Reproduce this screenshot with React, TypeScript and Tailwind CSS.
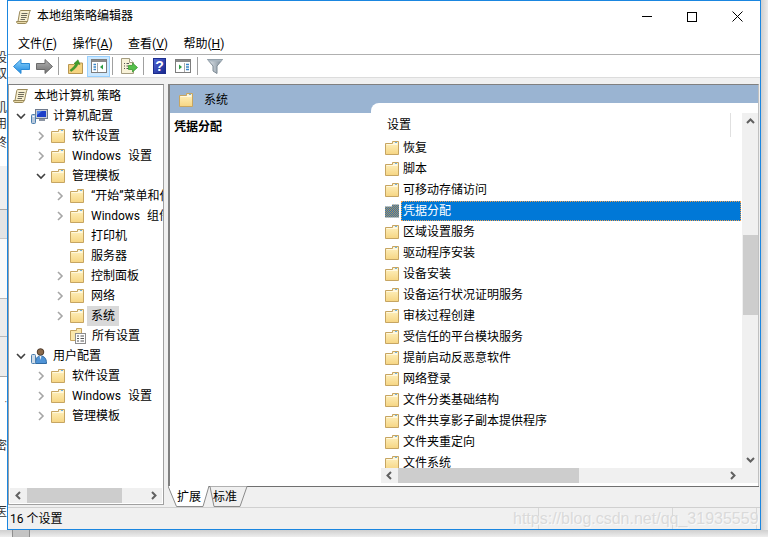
import React from "react";

const treeRows = [
  { label: "本地计算机 策略", level: 0, icon: "scroll" },
  { label: "计算机配置", level: 1, icon: "computer", arrow: "open" },
  { label: "软件设置", level: 2, icon: "folder", arrow: "closed" },
  { label: "Windows 设置", level: 2, icon: "folder", arrow: "closed" },
  { label: "管理模板", level: 2, icon: "folder", arrow: "open" },
  { label: "“开始”菜单和任务栏", level: 3, icon: "folder", arrow: "closed" },
  { label: "Windows 组件", level: 3, icon: "folder", arrow: "closed" },
  { label: "打印机", level: 3, icon: "folder" },
  { label: "服务器", level: 3, icon: "folder" },
  { label: "控制面板", level: 3, icon: "folder", arrow: "closed" },
  { label: "网络", level: 3, icon: "folder", arrow: "closed" },
  { label: "系统", level: 3, icon: "folder", arrow: "closed", selected: true },
  { label: "所有设置", level: 3, icon: "settings" },
  { label: "用户配置", level: 1, icon: "user", arrow: "open" },
  { label: "软件设置", level: 2, icon: "folder", arrow: "closed" },
  { label: "Windows 设置", level: 2, icon: "folder", arrow: "closed" },
  { label: "管理模板", level: 2, icon: "folder", arrow: "closed" },
];

const settings = [
  "恢复",
  "脚本",
  "可移动存储访问",
  "凭据分配",
  "区域设置服务",
  "驱动程序安装",
  "设备安装",
  "设备运行状况证明服务",
  "审核过程创建",
  "受信任的平台模块服务",
  "提前启动反恶意软件",
  "网络登录",
  "文件分类基础结构",
  "文件共享影子副本提供程序",
  "文件夹重定向",
  "文件系统",
];

const levelPad: Record<number, string> = {
  0: "pl-[4px]",
  1: "pl-[4px]",
  2: "pl-[24px]",
  3: "pl-[43px]",
};

const FolderIcon = ({ dither = false }: { dither?: boolean }) => (
  <svg width="14" height="14" viewBox="0 0 14 14" className="shrink-0">
    <defs>
      <linearGradient id="folderFill" x1="0" y1="0" x2="0" y2="1">
        <stop offset="0" stopColor="#fff3c4" />
        <stop offset="1" stopColor="#f6d582" />
      </linearGradient>
      <pattern id="folderDither" width="2" height="2" patternUnits="userSpaceOnUse">
        <rect width="2" height="2" fill="#b89a50" />
        <rect width="1" height="1" fill="#2a6fc0" />
        <rect x="1" y="1" width="1" height="1" fill="#2a6fc0" />
      </pattern>
    </defs>
    {dither ? (
      <path d="M0 2.5H7V0.5H14V13.5H0Z" fill="url(#folderDither)" />
    ) : (
      <>
        <path d="M.5 2.5H7.5V.5H13.5V13.5H.5Z" fill="url(#folderFill)" stroke="#c6a562" />
        <path d="M8 1.5H12.5V3H8Z" fill="#fdf6dc" />
        <rect x="10" y="1" width="2" height="1" fill="#6fb1e0" />
        <path d="M1.5 3.5H12.5" stroke="#fff8e0" />
      </>
    )}
  </svg>
);

const ScrollIcon = () => (
  <svg width="16" height="16" viewBox="0 0 16 16" className="shrink-0">
    <path d="M4.5 1.5H14.5C13.5 2.5 13.5 3.5 13 5L11.5 12.5H2L3.5 4C3.8 2.5 3.8 2 4.5 1.5Z" fill="#f7efd0" stroke="#9a8a5a" />
    <path d="M.5 12.5H11C10.5 14 10.5 14.5 9.5 14.5H2C1 14.5.5 13.5.5 12.5Z" fill="#e8d9a8" stroke="#9a8a5a" />
    <path d="M5.5 4.5H11.5M5 6.5H11M5 8.5H10.5M4.5 10.5H9" stroke="#6d6a5c" />
  </svg>
);

const ComputerIcon = () => (
  <svg width="17" height="16" viewBox="0 0 17 16" className="shrink-0">
    <rect x="4.5" y="1.5" width="12" height="9" fill="#c6ccd6" stroke="#6f7a8c" />
    <rect x="6" y="3" width="9" height="6" fill="#1d3fc9" />
    <path d="M6 3H11L6 7Z" fill="#4f86ea" />
    <rect x="8" y="11" width="6" height="2" fill="#8c95a3" />
    <rect x=".5" y="6.5" width="4" height="9" rx="1" fill="#b9c9dc" stroke="#4a7fae" />
    <rect x="1.5" y="8" width="2" height="1" fill="#fff" />
  </svg>
);

const UserIcon = () => (
  <svg width="17" height="16" viewBox="0 0 17 16" className="shrink-0">
    <circle cx="9.5" cy="4" r="3.3" fill="#8a6a4c" stroke="#4e3a2a" />
    <path d="M4.5 15.5C4.5 10 6.5 8 9.5 8C13 8 15.5 10 15.5 15.5Z" fill="#4f93d6" stroke="#2f6aa3" />
    <path d="M8.5 8L9.5 12L10.5 8Z" fill="#e8eef5" />
    <rect x=".5" y="6.5" width="4" height="9" rx="1" fill="#cfdbe8" stroke="#4a7fae" />
  </svg>
);

const SettingsIcon = () => (
  <svg width="17" height="16" viewBox="0 0 17 16" className="shrink-0">
    <path d="M.5 2.5H6.5V.5H11.5V7H5.5V12.5H.5Z" fill="#fbe7ab" stroke="#c6a562" />
    <rect x="5.5" y="5.5" width="10" height="10" fill="#fdfdfd" stroke="#8d8d8d" />
    <path d="M7 8H9M10.5 8H14M7 10.5H9M10.5 10.5H14M7 13H9M10.5 13H14" stroke="#555" />
  </svg>
);

const Chevron = ({ open }: { open?: boolean }) => (
  <svg width="10" height="10" viewBox="0 0 10 10">
    {open ? (
      <path d="M1 3L5 7L9 3" fill="none" stroke="#404040" strokeWidth="1.6" />
    ) : (
      <path d="M3 1L7 5L3 9" fill="none" stroke="#a6a6a6" strokeWidth="1.6" />
    )}
  </svg>
);

const ScrollArrow = ({ dir }: { dir: "up" | "down" | "left" | "right" }) => {
  const paths = {
    up: "M1 6L4.5 2.5L8 6",
    down: "M1 3L4.5 6.5L8 3",
    left: "M6 1L2.5 4.5L6 8",
    right: "M3 1L6.5 4.5L3 8",
  };
  return (
    <svg width="9" height="9" viewBox="0 0 9 9" className="shrink-0">
      <path d={paths[dir]} fill="none" stroke="#606060" strokeWidth="2" />
    </svg>
  );
};

const BackArrow = () => (
  <svg width="17" height="15" viewBox="0 0 17 15">
    <defs>
      <linearGradient id="backFill" x1="0" y1="0" x2="0" y2="1">
        <stop offset="0" stopColor="#8fd4fb" />
        <stop offset="1" stopColor="#1b87e0" />
      </linearGradient>
    </defs>
    <path d="M8 .5L.5 7.5L8 14.5V10.5H16.5V4.5H8Z" fill="url(#backFill)" stroke="#2b8ad6" />
  </svg>
);

const ForwardArrow = () => (
  <svg width="17" height="15" viewBox="0 0 17 15">
    <defs>
      <linearGradient id="forwardFill" x1="0" y1="0" x2="0" y2="1">
        <stop offset="0" stopColor="#b5b5b5" />
        <stop offset="1" stopColor="#6e6e6e" />
      </linearGradient>
    </defs>
    <path d="M9 .5L16.5 7.5L9 14.5V10.5H.5V4.5H9Z" fill="url(#forwardFill)" stroke="#6b6b6b" />
  </svg>
);

const UpFolder = () => (
  <svg width="15" height="15" viewBox="0 0 15 15">
    <path d="M.5 5.5H6L7 4H14.5V14.5H.5Z" fill="#f5d380" stroke="#b89650" />
    <path d="M2 11C4 9.5 6 8 7.5 5L6 4.5L10 .8L12 5.5L10 5C9 8 6 11 3 12.5Z" fill="#3f9e2c" stroke="#2f7d20" strokeWidth=".5" />
  </svg>
);

const PaneIcon = ({ active }: { active?: boolean }) => (
  <svg width="16" height="14" viewBox="0 0 16 14">
    <rect x=".5" y=".5" width="15" height="13" fill="#fff" stroke="#7d7d7d" />
    <rect x="1" y="1" width="14" height="2" fill="#8a8a8a" />
    {active ? (
      <>
        <path d="M2.5 5.5H5M2.5 8H5M2.5 10.5H5" stroke="#3a86c8" strokeWidth="1.4" />
        <path d="M6.5 4V13" stroke="#a8a8a8" />
        <path d="M12 5.5V10.5L9 8Z" fill="#2f9e44" />
      </>
    ) : (
      <>
        <path d="M4 5.5V10.5L7 8Z" fill="#2f9e44" />
        <path d="M9.5 4V13" stroke="#a8a8a8" />
        <path d="M11 5.5H14M11 8H14M11 10.5H14" stroke="#3a86c8" strokeWidth="1.4" />
      </>
    )}
  </svg>
);

const ExportIcon = () => (
  <svg width="17" height="16" viewBox="0 0 17 16">
    <path d="M.5.5H8.5L12.5 4.5V15.5H.5Z" fill="#f8f2d8" stroke="#a49c80" />
    <path d="M8.5.5V4.5H12.5" fill="#fff" stroke="#a49c80" />
    <path d="M3 5.5H4M5.5 5.5H8M3 8H4M5.5 8H7.5M3 10.5H4M5.5 10.5H7.5" stroke="#555" />
    <path d="M7.5 7.5H11.5V5L16.5 9.5L11.5 14V11.5H7.5Z" fill="#55c04a" stroke="#3a9a33" strokeWidth=".8" />
  </svg>
);

const HelpIcon = () => (
  <svg width="13" height="16" viewBox="0 0 13 16">
    <defs>
      <linearGradient id="helpFill" x1="0" y1="0" x2="1" y2="1">
        <stop offset="0" stopColor="#5268d8" />
        <stop offset="1" stopColor="#16258c" />
      </linearGradient>
    </defs>
    <rect x=".5" y=".5" width="12" height="15" fill="url(#helpFill)" stroke="#1c2d8c" />
    <text x="6.5" y="13" textAnchor="middle" fontSize="14" fontWeight="700" fill="#fff" fontFamily="Liberation Sans, sans-serif">?</text>
  </svg>
);

const FilterIcon = () => (
  <svg width="16" height="16" viewBox="0 0 16 16">
    <defs>
      <linearGradient id="filterFill" x1="0" y1="0" x2="1" y2="0">
        <stop offset="0" stopColor="#e8edf2" />
        <stop offset="1" stopColor="#7c8a96" />
      </linearGradient>
    </defs>
    <path d="M.5 1.5H15.5L10 8V15.5L6 13V8Z" fill="url(#filterFill)" stroke="#7d8a94" />
    <path d="M.5 1.5H15.5L14 3.5H2Z" fill="#a9b6c0" />
  </svg>
);

const TabShape = ({ active }: { active?: boolean }) => (
  <svg width="42" height="22" viewBox="0 0 42 22" className="absolute left-0 top-0">
    {active ? (
      <path d="M0 0L8.5 20.5H35L41 0" fill="#fff" stroke="#8a8a8a" />
    ) : (
      <path d="M1 .5L5 20.5H31L38 .5" fill="#f0f0f0" stroke="#8a8a8a" />
    )}
  </svg>
);

const Sep = ({ className }: { className: string }) => (
  <div className={`w-px h-[18px] bg-[#a0a0a0] ${className}`} />
);

const ToolButton = ({ children, active }: { children: React.ReactNode; active?: boolean }) => (
  <div
    className={`w-[23px] h-[21px] flex items-center justify-center border ${
      active ? "bg-[#cce8ff] border-[#99d1ff]" : "border-transparent"
    }`}
  >
    {children}
  </div>
);

const LeftStripText = ({ children, className }: { children: string; className: string }) => (
  <div className={`h-[14px] flex justify-end text-[12px] leading-[14px] text-[#333] ${className}`}>
    <span className="shrink-0">{children}</span>
  </div>
);

export default function App() {
  return (
    <div className="w-[768px] h-[537px] overflow-hidden bg-[#f4f4f4] relative font-['Roboto','Noto_Sans_CJK_SC',sans-serif] text-[12px] text-black">
      <div className="flex h-[530px]">
        {/* what shows of the desktop on the left */}
        <div className="w-[7px] shrink-0 overflow-hidden bg-white flex flex-col">
          <div className="h-[51px]" />
          <LeftStripText className="mb-[2px]">设</LeftStripText>
          <LeftStripText className="mb-[20px]">双</LeftStripText>
          <LeftStripText className="mb-[2px]">肌</LeftStripText>
          <LeftStripText className="mb-[5px]">用</LeftStripText>
          <LeftStripText className="">终</LeftStripText>
          <div className="h-[16px]" />
          <div className="h-[44px] bg-[#efefef] border-b border-[#a8a8a8]" />
          <div className="h-[29px] bg-[#e4e4e4] border-b border-[#c8c8c8]" />
          <div className="h-[60px] bg-[#fafafa] border-b border-[#b8b8b8]" />
          <div className="h-[38px] bg-[#ececec] border-b border-[#b8b8b8]" />
          <div className="h-[40px] bg-[#ececec] border-b border-[#a8a8a8]" />
          <div className="h-[30px] bg-white text-[10px] leading-[52px] text-[#444] text-right">·</div>
          <div className="h-[32px] bg-white" />
          <LeftStripText className="bg-white">密</LeftStripText>
          <div className="h-[52px] bg-white" />
          <LeftStripText className="bg-white">医</LeftStripText>
        </div>

        <div className="w-[754px] shrink-0 h-[530px] border border-[#1a86e0] bg-white flex flex-col">
          {/* title bar */}
          <div className="h-[31px] flex items-center pl-[8px] bg-white">
            <ScrollIcon />
            <span className="ml-[5px] text-[12px] mb-[1px]">本地组策略编辑器</span>
            <div className="ml-auto flex h-full">
              <div className="w-[45px] flex items-center justify-center">
                <div className="w-[10px] h-px bg-black mb-[1px]" />
              </div>
              <div className="w-[45px] flex items-center justify-center">
                <div className="w-[10px] h-[10px] border border-black" />
              </div>
              <div className="w-[46px] pl-[1px] flex items-center justify-center">
                <svg width="11" height="11" viewBox="0 0 11 11">
                  <path d="M.5.5L10.5 10.5M10.5.5L.5 10.5" stroke="#000" />
                </svg>
              </div>
            </div>
          </div>

          {/* menu */}
          <div className="h-[23px] flex items-center gap-[15.5px] pl-[10px] border-b border-[#b0b0b0] pt-[1px]">
            <span>文件(<span className="underline">F</span>)</span>
            <span>操作(<span className="underline">A</span>)</span>
            <span>查看(<span className="underline">V</span>)</span>
            <span>帮助(<span className="underline">H</span>)</span>
          </div>

          {/* toolbar */}
          <div className="h-[23px] flex items-center pl-[2px] border-b border-[#dcdcdc]">
            <ToolButton><BackArrow /></ToolButton>
            <ToolButton><ForwardArrow /></ToolButton>
            <Sep className="ml-[2px]" />
            <div className="ml-[5px]"><ToolButton><UpFolder /></ToolButton></div>
            <ToolButton active><PaneIcon active /></ToolButton>
            <Sep className="ml-[2px]" />
            <div className="ml-[5px]"><ToolButton><ExportIcon /></ToolButton></div>
            <Sep className="ml-[2px]" />
            <div className="ml-[4px]"><ToolButton><HelpIcon /></ToolButton></div>
            <ToolButton><PaneIcon /></ToolButton>
            <Sep className="ml-[3px]" />
            <div className="ml-[5px]"><ToolButton><FilterIcon /></ToolButton></div>
          </div>

          {/* main area */}
          <div className="flex-1 min-h-0 bg-[#f0f0f0] pt-[6px] flex">
            {/* tree */}
            <div className="w-[156px] h-[421px] bg-white border border-[#a0a0a0] border-t-[#808080] flex flex-col">
              <div className="flex-1 min-h-0 pt-[1px] overflow-hidden">
                {treeRows.map((row, i) => (
                  <div key={i} className={`h-5 flex items-center whitespace-nowrap ${levelPad[row.level]}`}>
                    {row.level === 0 ? (
                      <>
                        <ScrollIcon />
                        <span className="ml-[5px]">{row.label}</span>
                      </>
                    ) : (
                      <>
                        <span className="w-[15px] shrink-0 flex justify-start pl-[3px]">
                          {row.arrow && <Chevron open={row.arrow === "open"} />}
                        </span>
                        <span className="w-[3px] shrink-0" />
                        {row.icon === "folder" && <FolderIcon />}
                        {row.icon === "computer" && <ComputerIcon />}
                        {row.icon === "user" && <UserIcon />}
                        {row.icon === "settings" && <SettingsIcon />}
                        <span
                          className={`h-5 leading-5 px-[4px] ${row.icon === "folder" ? "ml-[3px]" : "ml-[1px]"} ${
                            row.selected ? "bg-[#d9d9d9]" : ""
                          } ${row.label.startsWith("Windows") ? "[word-spacing:4px]" : ""}`}
                        >
                          {row.label}
                        </span>
                      </>
                    )}
                  </div>
                ))}
              </div>
              {/* tree scrollbar */}
              <div className="h-[15px] mx-[1px] mb-px bg-[#f0f0f0] flex items-center">
                <div className="w-[17px] flex justify-center"><ScrollArrow dir="left" /></div>
                <div className="w-[95px] h-full bg-[#cdcdcd]" />
                <div className="ml-auto w-[17px] flex justify-center"><ScrollArrow dir="right" /></div>
              </div>
            </div>

            {/* right side */}
            <div className="ml-[4px] w-[591px] flex flex-col">
              <div className="h-[402px] border-t border-[#808080] border-l-2 border-l-[#808080] border-r border-r-[#c0c0c0] bg-white flex">
                {/* description column */}
                <div className="w-[201px] shrink-0 flex flex-col">
                  <div className="h-[28px] bg-[#9ab4d2] flex items-center pl-[9px] pt-[1px]">
                    <FolderIcon />
                    <span className="ml-[11px]">系统</span>
                  </div>
                  <div className="pl-[4px] pt-[5px] font-bold">凭据分配</div>
                </div>

                {/* settings column */}
                <div className="flex-1 min-w-0 bg-[#9ab4d2] pt-[18px]">
                  <div className="h-full bg-white rounded-tl-[8px] flex flex-col">
                    <div className="h-[365px] flex">
                      <div className="flex-1 min-w-0 flex flex-col">
                        <div className="h-[34px] pt-[10px] relative flex items-center pl-[16px]">
                          <span>设置</span>
                          <div className="ml-auto mr-[11px] w-px h-[24px] bg-[#e0e0e0]" />
                        </div>
                        <div className="flex-1 min-h-0 overflow-hidden">
                          {settings.map((item, i) => {
                            const sel = item === "凭据分配";
                            return (
                              <div key={i} className="h-[21px] flex items-center pl-[14px] whitespace-nowrap">
                                <FolderIcon dither={sel} />
                                <div
                                  className={`ml-[2px] flex-1 h-[20px] leading-[18px] pl-[1px] border border-dotted ${
                                    sel ? "bg-[#0078d7] text-white border-[#f0a050]" : "border-transparent"
                                  } mr-px`}
                                >
                                  {item}
                                </div>
                              </div>
                            );
                          })}
                        </div>
                      </div>
                      <div className="w-[16px] shrink-0 pt-[10px] bg-white">
                        <div className="h-full bg-[#f0f0f0] flex flex-col items-center">
                          <div className="h-[17px] flex items-center"><ScrollArrow dir="up" /></div>
                          <div className="mt-[105px] w-[15px] h-[80px] bg-[#cdcdcd]" />
                          <div className="mt-auto h-[17px] flex items-center"><ScrollArrow dir="down" /></div>
                        </div>
                      </div>
                    </div>
                    <div className="h-[15px] ml-[10px] bg-[#f0f0f0] flex items-center">
                      <div className="w-[17px] flex justify-center"><ScrollArrow dir="left" /></div>
                      <div className="w-[181px] h-full bg-[#cdcdcd]" />
                      <div className="ml-auto mr-[21px] flex justify-center"><ScrollArrow dir="right" /></div>
                    </div>
                  </div>
                </div>
              </div>

              {/* tabs */}
              <div className="h-[21px] flex border-t border-[#707070] pl-0">
                <div className="relative w-[41px] h-[21px] -mt-px">
                  <TabShape active />
                  <span className="absolute left-[9px] top-[2px] leading-[18px]">扩展</span>
                </div>
                <div className="relative w-[40px] h-[21px] -mt-px">
                  <TabShape />
                  <span className="absolute left-[4px] top-[2px] leading-[18px]">标准</span>
                </div>
              </div>
            </div>
          </div>

          {/* status bar */}
          <div className="h-[22px] bg-[#f0f0f0] border-t border-[#d0d0d0] flex">
            <div className="w-[531px] pl-[2px] flex items-center border-r border-[#d8d8d8]">16 个设置</div>
            <div className="w-[134px] border-r border-[#d8d8d8]" />
            <div className="w-[84px] border-r border-[#d8d8d8]" />
          </div>
        </div>

        <div className="flex-1 bg-gradient-to-r from-[#cfcfcf] to-[#ececec]" />
      </div>

      {/* shadow under the window */}
      <div className="h-[7px] flex bg-gradient-to-b from-[#cfcfcf] to-[#eeeeee]">
        <div className="ml-[12px] w-[18px] h-full bg-[#c4c4c4] border-x border-[#8f8f8f]" />
      </div>

      {/* watermark over the status bar */}
      <div className="absolute left-[513px] top-[507px] font-['Liberation_Sans',sans-serif] text-[16px] leading-[24px] text-[#dadada] [text-shadow:1px_1px_0_#fafafa] whitespace-nowrap">
        https://blog.csdn.net/qq_31935559
      </div>
    </div>
  );
}
